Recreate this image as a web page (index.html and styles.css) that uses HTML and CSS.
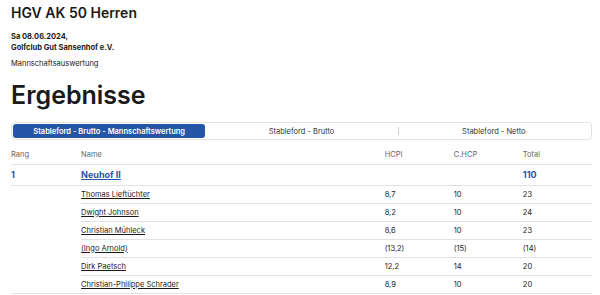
FILE: index.html
```html
<!DOCTYPE html>
<html lang="de">
<head>
    <meta charset="UTF-8">
    <meta name="viewport" content="width=device-width, initial-scale=1.0">
    <title>HGV AK 50 Herren - Ergebnisse</title>
    <link rel="stylesheet" href="styles.css">
</head>
<body>
    <div class="container">
        <h1 class="event-title">HGV AK 50 Herren</h1>
        <p class="event-meta">Sa 08.06.2024,<br>Golfclub Gut Sansenhof e.V.</p>
        <p class="event-type">Mannschaftsauswertung</p>

        <h2 class="results-title">Ergebnisse</h2>

        <div class="tabs">
            <div class="tab active">Stableford - Brutto - Mannschaftswertung</div>
            <div class="tab">Stableford - Brutto</div>
            <div class="tab tab-sep">Stableford - Netto</div>
        </div>

        <table class="results">
            <thead>
                <tr>
                    <th class="col-rank">Rang</th>
                    <th class="col-name">Name</th>
                    <th class="col-num">HCPI</th>
                    <th class="col-num">C.HCP</th>
                    <th class="col-num">Total</th>
                </tr>
            </thead>
            <tbody>
                <tr class="team-row">
                    <td class="col-rank">1</td>
                    <td class="col-name"><a href="#">Neuhof II</a></td>
                    <td></td>
                    <td></td>
                    <td class="team-total">110</td>
                </tr>
                <tr class="player-row">
                    <td class="blank"></td>
                    <td><a href="#">Thomas Lieftüchter</a></td>
                    <td>8,7</td>
                    <td>10</td>
                    <td>23</td>
                </tr>
                <tr class="player-row">
                    <td class="blank"></td>
                    <td><a href="#">Dwight Johnson</a></td>
                    <td>8,2</td>
                    <td>10</td>
                    <td>24</td>
                </tr>
                <tr class="player-row">
                    <td class="blank"></td>
                    <td><a href="#">Christian Mühleck</a></td>
                    <td>8,6</td>
                    <td>10</td>
                    <td>23</td>
                </tr>
                <tr class="player-row">
                    <td class="blank"></td>
                    <td><a href="#">(Ingo Arnold)</a></td>
                    <td>(13,2)</td>
                    <td>(15)</td>
                    <td>(14)</td>
                </tr>
                <tr class="player-row">
                    <td class="blank"></td>
                    <td><a href="#">Dirk Paetsch</a></td>
                    <td>12,2</td>
                    <td>14</td>
                    <td>20</td>
                </tr>
                <tr class="player-row last">
                    <td></td>
                    <td><a href="#">Christian-Philippe Schrader</a></td>
                    <td>8,9</td>
                    <td>10</td>
                    <td>20</td>
                </tr>
            </tbody>
        </table>
    </div>
</body>
</html>
```

FILE: styles.css
```css
:root {
    --blue: #2455a6;
    --text: #1a1a1a;
    --muted: #666;
    --line: #e2e2e2;
}

* {
    box-sizing: border-box;
    margin: 0;
    padding: 0;
}

body {
    font-family: 'Inter', 'Liberation Sans', sans-serif;
    color: var(--text);
    background: white;
}

.container {
    padding: 4px 8px 0 11px;
}

.event-title {
    font-size: 14px;
    font-weight: 600;
    line-height: 17px;
}

.event-meta {
    margin-top: 10px;
    font-size: 7.5px;
    font-weight: 700;
    line-height: 11px;
}

.event-type {
    margin-top: 5px;
    font-size: 7.5px;
    line-height: 11px;
}

.results-title {
    margin-top: 11px;
    font-size: 25px;
    font-weight: 600;
    line-height: 30px;
}

.tabs {
    display: flex;
    margin-top: 12px;
    height: 18px;
    padding: 1px;
    border: 1px solid var(--line);
    border-radius: 4px;
}

.tab {
    flex: 1;
    display: flex;
    align-items: center;
    justify-content: center;
    font-size: 7.5px;
    color: #333;
    position: relative;
}

.tab.active {
    background: var(--blue);
    color: white;
    font-weight: 600;
    border-radius: 3px;
}

.tab-sep::before {
    content: "";
    position: absolute;
    left: 0;
    top: 3px;
    bottom: 3px;
    border-left: 1px solid #ccc;
}

.results {
    width: 100%;
    margin-top: 5px;
    border-collapse: collapse;
    font-size: 7.5px;
}

.results th {
    text-align: left;
    font-weight: 400;
    color: var(--muted);
    height: 19px;
    border-bottom: 1px solid var(--line);
}

.results td {
    height: 18px;
    border-bottom: 1px solid var(--line);
}

.results td.blank {
    border-bottom: none;
}

.col-rank {
    width: 70px;
}

.col-name {
    width: 303px;
}

.col-num {
    width: 69px;
}

.results a {
    color: var(--text);
}

.team-row td {
    height: 21px;
    font-size: 9px;
    font-weight: 700;
    color: var(--blue);
}

.team-row a {
    color: var(--blue);
}

.player-row.last td {
    border-bottom: 1px solid var(--line);
}
```
